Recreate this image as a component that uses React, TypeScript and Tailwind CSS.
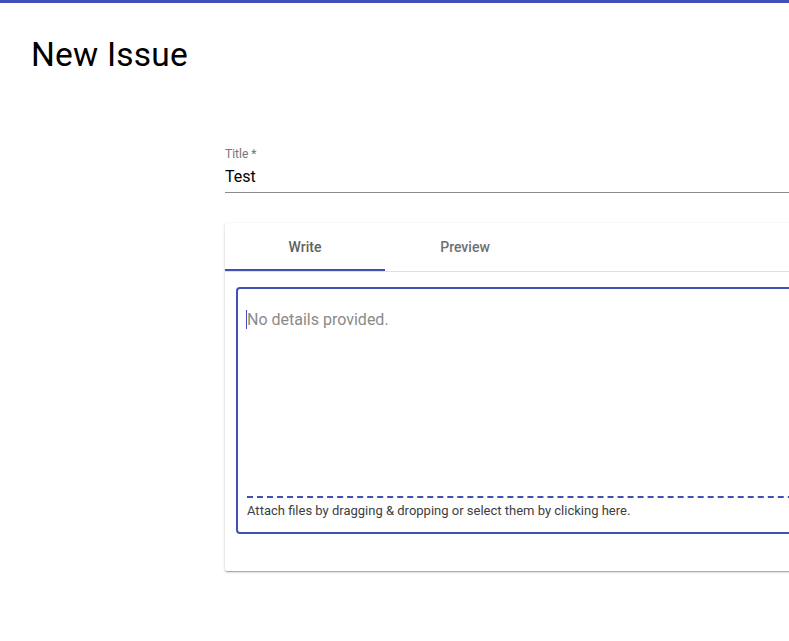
import React from "react";

const App: React.FC = () => {
  return (
    <div
      className="relative w-[789px] h-[641px] overflow-hidden bg-white"
      style={{ fontFamily: "Roboto, 'Liberation Sans', sans-serif" }}
    >
      {/* Top accent bar */}
      <div className="h-[3px] bg-[#3f51b5]" />

      {/* Page heading */}
      <h1 className="pl-[31px] pt-[31px] text-[33.5px] leading-[42px] text-black font-normal tracking-[0.2px]">
        New Issue
      </h1>

      {/* Form */}
      <div className="ml-[225px] mt-[69px] w-[720px]">
        {/* Title field */}
        <div className="flex flex-col border-b border-[#8a8a8a]">
          <label className="mt-[2px] text-[12px] leading-[14px] text-[#757575]">Title *</label>
          <div className="pt-[6px] pb-[6px] text-[16px] leading-[19px] text-black">Test</div>
        </div>

        {/* Editor card */}
        <div className="mt-[30px] bg-white rounded-[2px] shadow-[0_1px_3px_rgba(0,0,0,0.2),0_1px_1px_rgba(0,0,0,0.14),0_2px_1px_-1px_rgba(0,0,0,0.12)]">
          <div className="flex border-b border-[#e0e0e0]">
            <div className="relative w-[160px] h-[48px] flex items-center justify-center text-[14px] font-medium text-[#616161]">
              Write
              <div className="absolute left-0 right-0 bottom-0 h-[2px] bg-[#3f51b5]" />
            </div>
            <div className="w-[160px] h-[48px] flex items-center justify-center text-[14px] font-medium text-[#6f6f6f]">
              Preview
            </div>
          </div>

          <div className="pl-[11px] pt-[15px] pb-[37px]">
            <div className="h-[247px] border-2 border-[#3f51b5] rounded-[4px] flex flex-col px-[9px]">
              <div className="flex-1 pt-[21px] text-[16px] leading-[19px] text-[#8a8a8a] flex items-start">
                <span className="w-px h-[19px] bg-[#3f51b5] -ml-px" />
                <span>No details provided.</span>
              </div>
              <div className="border-t-2 border-dashed border-[#3f51b5] pt-[5px] pb-[14px] text-[13px] leading-[15px] text-[#3c4043]">
                Attach files by dragging &amp; dropping or select them by clicking here.
              </div>
            </div>
          </div>
        </div>
      </div>
    </div>
  );
};

export default App;
